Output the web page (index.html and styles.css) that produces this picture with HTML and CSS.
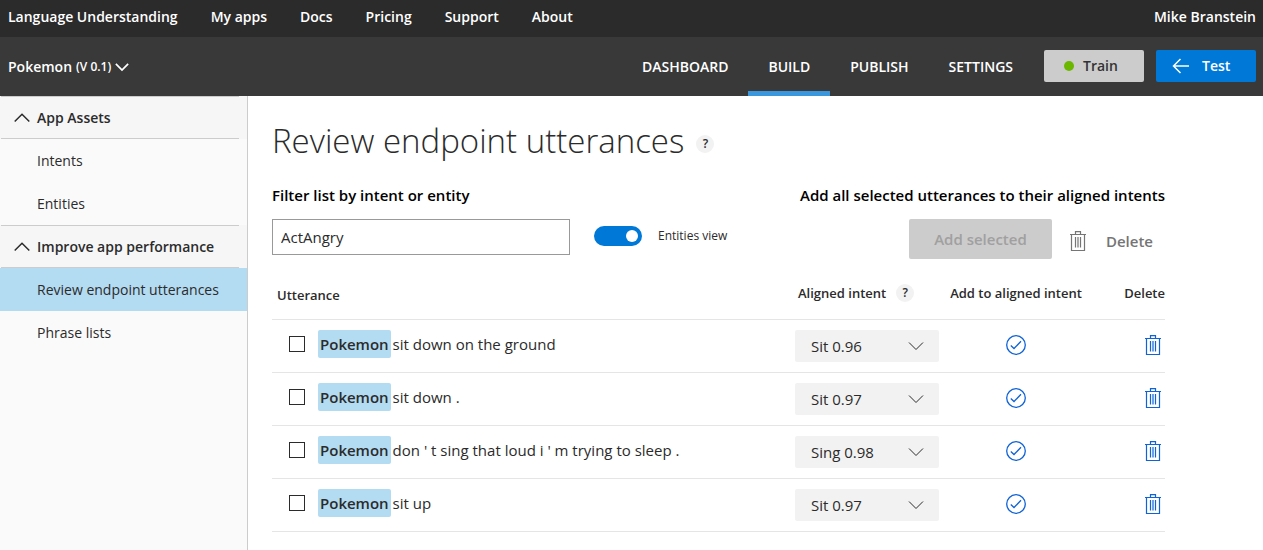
FILE: index.html
```html
<!DOCTYPE html>
<html lang="en">
<head>
<meta charset="utf-8">
<meta name="viewport" content="width=device-width, initial-scale=1">
<title>Review endpoint utterances</title>
<link rel="stylesheet" href="styles.css">
</head>
<body>
<svg class="sprite" aria-hidden="true">
  <symbol id="chevron-down" viewBox="0 0 16 16"><path d="M1 4.500l7 7 7-7"/></symbol>
  <symbol id="chevron-up" viewBox="0 0 16 16"><path d="M.7 11.500L8 4.200l7.300 7.300"/></symbol>
  <symbol id="arrow-left" viewBox="0 0 18 16"><path d="M17 8H1.500M8.500 1l-7 7 7 7"/></symbol>
  <symbol id="check-circle" viewBox="0 0 20 20"><circle cx="10" cy="10" r="9.300"/><path d="M4.800 10.500l3.200 3 7-7.200"/></symbol>
  <symbol id="trash" viewBox="0 0 18 20"><path d="M1 3.500h16M6.500 3V.6h5V3M2.500 3.500v16h13v-16M6.500 6v10.500M9 6v10.500M11.500 6v10.500"/></symbol>
</svg>

<header>
  <div class="topbar">
    <nav class="site-nav" aria-label="Site">
      <a href="#">Language Understanding</a>
      <a href="#">My apps</a>
      <a href="#">Docs</a>
      <a href="#">Pricing</a>
      <a href="#">Support</a>
      <a href="#">About</a>
    </nav>
    <a href="#">Mike Branstein</a>
  </div>
  <div class="appbar">
    <button class="app-name" type="button">Pokemon <span class="version">(V 0.1)</span><svg class="icon icon-chevron"><use href="#chevron-down"/></svg></button>
    <nav class="tabs" aria-label="App">
      <a class="tab" href="#">DASHBOARD</a>
      <a class="tab tab-active" href="#" aria-current="page">BUILD</a>
      <a class="tab" href="#">PUBLISH</a>
      <a class="tab" href="#">SETTINGS</a>
    </nav>
    <div class="app-actions">
      <button class="btn btn-train" type="button"><span class="dot"></span>Train</button>
      <button class="btn btn-test" type="button"><svg class="icon icon-arrow"><use href="#arrow-left"/></svg>Test</button>
    </div>
  </div>
</header>

<div class="shell">
  <aside class="sidebar">
    <div class="side-head"><button class="side-toggle" type="button"><svg class="icon icon-up"><use href="#chevron-up"/></svg>App Assets</button></div>
    <a class="side-link" href="#">Intents</a>
    <a class="side-link" href="#">Entities</a>
    <div class="side-head"><button class="side-toggle" type="button"><svg class="icon icon-up"><use href="#chevron-up"/></svg>Improve app performance</button></div>
    <a class="side-link side-link-active" href="#" aria-current="page">Review endpoint utterances</a>
    <a class="side-link" href="#">Phrase lists</a>
  </aside>

  <main class="main">
    <div class="title-row">
      <h1 class="title">Review endpoint utterances</h1>
      <button class="help" type="button">?</button>
    </div>

    <div class="toolbar">
      <div class="tool-group">
        <label class="tool-label" for="filter">Filter list by intent or entity</label>
        <div class="filter-row">
          <input class="filter" id="filter" type="text" value="ActAngry">
          <label class="switch-label"><input class="switch" type="checkbox" role="switch" checked>Entities view</label>
        </div>
      </div>
      <div class="tool-group">
        <div class="tool-label">Add all selected utterances to their aligned intents</div>
        <div class="bulk-row">
          <button class="btn btn-add" type="button" disabled>Add selected</button>
          <button class="btn-delete" type="button" disabled><svg class="icon icon-trash"><use href="#trash"/></svg>Delete</button>
        </div>
      </div>
    </div>

    <table class="list">
      <colgroup><col><col class="col-intent"><col class="col-add"><col class="col-delete"></colgroup>
      <thead>
        <tr>
          <th class="head-utterance">Utterance</th>
          <th><span class="head-intent">Aligned intent <button class="help" type="button">?</button></span></th>
          <th class="center">Add to aligned intent</th>
          <th class="right">Delete</th>
        </tr>
      </thead>
      <tbody>
        <tr>
          <td><label class="utterance"><input class="check" type="checkbox"><span><mark class="entity">Pokemon</mark>sit down on the ground</span></label></td>
          <td><span class="picker"><select class="intent" aria-label="Aligned intent"><option>Sit 0.96</option></select><svg class="icon icon-down"><use href="#chevron-down"/></svg></span></td>
          <td class="center"><button class="icon-btn" type="button" aria-label="Add to aligned intent"><svg class="icon icon-check"><use href="#check-circle"/></svg></button></td>
          <td class="right"><button class="icon-btn" type="button" aria-label="Delete"><svg class="icon icon-trash"><use href="#trash"/></svg></button></td>
        </tr>
        <tr>
          <td><label class="utterance"><input class="check" type="checkbox"><span><mark class="entity">Pokemon</mark>sit down .</span></label></td>
          <td><span class="picker"><select class="intent" aria-label="Aligned intent"><option>Sit 0.97</option></select><svg class="icon icon-down"><use href="#chevron-down"/></svg></span></td>
          <td class="center"><button class="icon-btn" type="button" aria-label="Add to aligned intent"><svg class="icon icon-check"><use href="#check-circle"/></svg></button></td>
          <td class="right"><button class="icon-btn" type="button" aria-label="Delete"><svg class="icon icon-trash"><use href="#trash"/></svg></button></td>
        </tr>
        <tr>
          <td><label class="utterance"><input class="check" type="checkbox"><span><mark class="entity">Pokemon</mark>don ' t sing that loud i ' m trying to sleep .</span></label></td>
          <td><span class="picker"><select class="intent" aria-label="Aligned intent"><option>Sing 0.98</option></select><svg class="icon icon-down"><use href="#chevron-down"/></svg></span></td>
          <td class="center"><button class="icon-btn" type="button" aria-label="Add to aligned intent"><svg class="icon icon-check"><use href="#check-circle"/></svg></button></td>
          <td class="right"><button class="icon-btn" type="button" aria-label="Delete"><svg class="icon icon-trash"><use href="#trash"/></svg></button></td>
        </tr>
        <tr>
          <td><label class="utterance"><input class="check" type="checkbox"><span><mark class="entity">Pokemon</mark>sit up</span></label></td>
          <td><span class="picker"><select class="intent" aria-label="Aligned intent"><option>Sit 0.97</option></select><svg class="icon icon-down"><use href="#chevron-down"/></svg></span></td>
          <td class="center"><button class="icon-btn" type="button" aria-label="Add to aligned intent"><svg class="icon icon-check"><use href="#check-circle"/></svg></button></td>
          <td class="right"><button class="icon-btn" type="button" aria-label="Delete"><svg class="icon icon-trash"><use href="#trash"/></svg></button></td>
        </tr>
      </tbody>
    </table>
  </main>
</div>
</body>
</html>
```

FILE: styles.css
```css
* { box-sizing: border-box; }

body {
  margin: 0;
  min-height: 100vh;
  display: flex;
  flex-direction: column;
  background: #fff;
  color: #2b2b2b;
  font: 14px/20px "Open Sans", "Noto Sans", sans-serif;
}

a { color: inherit; text-decoration: none; }

button, input, select {
  margin: 0;
  padding: 0;
  border: 0;
  background: none;
  color: inherit;
  font: inherit;
}

.sprite { display: none; }

.icon {
  flex: none;
  fill: none;
  stroke: currentColor;
  stroke-width: 1;
}

/* Header */
.topbar {
  display: flex;
  justify-content: space-between;
  padding: 7px 7px 10px 8px;
  background: #2b2b2b;
  color: #fff;
  font-weight: 600;
}

.site-nav { display: flex; gap: 33px; }

.appbar {
  display: flex;
  align-items: stretch;
  height: 59px;
  padding: 0 7px 0 8px;
  background: #393939;
  color: #fff;
  font-weight: 600;
}

.app-name {
  display: flex;
  align-items: center;
  gap: 4px;
  margin-right: auto;
}

.version { font-size: 12px; }

.icon-chevron { width: 14px; height: 14px; stroke-width: 2; }

.tabs { display: flex; }

.tab {
  display: flex;
  align-items: center;
  padding: 5px 20px 0;
  border-bottom: 5px solid transparent;
}

.tab-active { border-bottom-color: #3a96dd; }

.app-actions {
  display: flex;
  align-items: center;
  gap: 12px;
  padding-left: 11px;
  margin-top: -2px;
}

.btn {
  display: flex;
  align-items: center;
  justify-content: center;
  width: 100px;
  height: 32px;
  border-radius: 2px;
  font-weight: 600;
}

.btn-train {
  justify-content: flex-start;
  gap: 9px;
  padding-left: 20px;
  background: #ccc;
  color: #333;
}

.dot { width: 10px; height: 10px; border-radius: 50%; background: #6bb700; }

.btn-test {
  justify-content: flex-start;
  gap: 12px;
  padding-left: 16px;
  background: #0078d7;
}

.icon-arrow { width: 18px; height: 16px; stroke-width: 1.500; }

/* Sidebar */
.shell { display: flex; flex: 1; }

.sidebar {
  flex: 0 0 248px;
  border-right: 1px solid #ccc;
  background: #fafafa;
}

.side-head { padding: 0 8px 0 1px; background: #f6f6f6; }

.side-toggle {
  display: flex;
  align-items: center;
  gap: 7px;
  width: 100%;
  height: 43px;
  padding-left: 13px;
  border: solid #ccc;
  border-width: 1px 0;
  font-weight: 600;
}

.icon-up { width: 16px; height: 16px; stroke-width: 1.500; }

.side-link { display: block; padding: 12px 16px 11px 37px; }

.side-link-active { background: #b3dbf2; }

/* Main */
.main { flex: 1; min-width: 0; padding: 20px 98px 16px 24px; }

.title-row { display: flex; align-items: center; gap: 12px; }

.title { margin: 0; font-size: 33px; line-height: 50px; font-weight: 300; }

.help {
  width: 18px;
  height: 18px;
  border-radius: 50%;
  background: #f2f2f2;
  font-size: 12px;
  line-height: 18px;
  font-weight: 600;
}

.title-row .help { margin-top: 6px; }

.toolbar {
  display: flex;
  justify-content: space-between;
  margin-top: 19px;
}

.tool-label {
  display: block;
  margin-bottom: 14px;
  color: #000;
  font-size: 15px;
  font-weight: 600;
}

.filter-row { display: flex; align-items: center; gap: 24px; }

.filter {
  width: 298px;
  height: 36px;
  padding: 0 8px;
  border: 1px solid #999;
  font-size: 15px;
}

.switch-label {
  display: flex;
  align-items: center;
  gap: 16px;
  padding-bottom: 2px;
  font-size: 12px;
}

.switch {
  appearance: none;
  display: flex;
  justify-content: flex-end;
  width: 48px;
  height: 20px;
  padding: 4px;
  border-radius: 10px;
  background: #0078d7;
}

.switch::before {
  content: "";
  width: 12px;
  height: 12px;
  border-radius: 50%;
  background: #fff;
}

.bulk-row {
  display: flex;
  align-items: center;
  justify-content: flex-end;
  gap: 17px;
  padding-right: 12px;
}

.btn-add { width: 143px; height: 40px; background: #ccc; color: #a0a0a0; font-size: 15px; }

.btn-delete {
  display: flex;
  align-items: center;
  gap: 19px;
  padding-top: 4px;
  color: #757575;
  font-size: 15px;
  font-weight: 600;
}

.icon-trash { width: 18px; height: 20px; stroke-width: 1.200; }

/* Utterance list */
.list {
  width: 100%;
  margin-top: 16px;
  table-layout: fixed;
  border-collapse: collapse;
}

.col-intent { width: 144px; }
.col-add { width: 154px; }
.col-delete { width: 72px; }

.list th {
  height: 44px;
  padding: 0 0 7px;
  text-align: left;
  font-size: 13px;
  font-weight: 600;
  white-space: nowrap;
}

.list td { height: 53px; padding: 0; }

.list tr { border-bottom: 1px solid #e5e5e5; }

.list .head-utterance { padding: 0 0 3px 5px; }
.list .center { text-align: center; }
.list .right { text-align: right; }

.head-intent { display: flex; align-items: center; gap: 10px; padding-left: 3px; }

.utterance {
  display: flex;
  align-items: center;
  gap: 13px;
  padding: 0 0 4px 17px;
  font-size: 15px;
}

.check {
  appearance: none;
  width: 16px;
  height: 16px;
  border: 1px solid #2b2b2b;
}

.entity {
  display: inline-block;
  margin-right: 2px;
  padding: 4px 2px;
  border-radius: 2px;
  background: #b3dbf2;
  color: #2b2b2b;
  font-weight: 600;
}

.picker { display: grid; align-items: center; }

.intent {
  grid-area: 1 / 1;
  appearance: none;
  width: 100%;
  height: 32px;
  padding: 0 16px;
  border-radius: 2px;
  background: #f2f2f2;
  font-size: 15px;
}

.icon-down {
  grid-area: 1 / 1;
  justify-self: end;
  width: 16px;
  height: 16px;
  margin-right: 15px;
  pointer-events: none;
}

.icon-btn {
  display: inline-flex;
  padding-bottom: 2px;
  vertical-align: middle;
  color: #0f63d6;
}

.icon-check { width: 20px; height: 20px; stroke-width: 1.300; }

.right .icon-btn { margin-right: 3px; }
```
